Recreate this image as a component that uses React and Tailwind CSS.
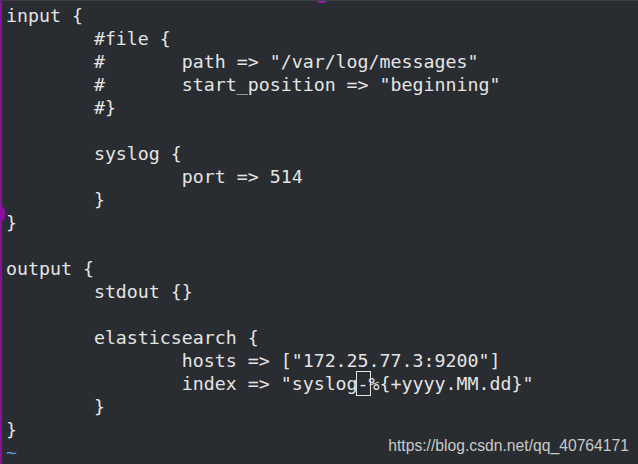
import React from "react";

const lines = [
  "input {",
  "        #file {",
  "        #       path => \"/var/log/messages\"",
  "        #       start_position => \"beginning\"",
  "        #}",
  "",
  "        syslog {",
  "                port => 514",
  "        }",
  "}",
  "",
  "output {",
  "        stdout {}",
  "",
  "        elasticsearch {",
  "                hosts => [\"172.25.77.3:9200\"]",
];

const App = () => {
  return (
    <main className="relative w-[638px] h-[464px] overflow-hidden bg-[#292c30] flex">
      {/* left edge bar */}
      <div className="w-[2px] h-full bg-[#8a0f9c] shrink-0"></div>
      <div className="absolute left-[-5px] top-[206px] w-[10px] h-[16px] rounded-full bg-[#8a0f9c]"></div>
      <div className="absolute left-[317px] top-[-5px] w-[10px] h-[8px] rounded-full bg-[#a01cb5]"></div>
      <div className="absolute left-0 top-0 w-full h-[1px] bg-[#3c4045]"></div>

      <div className="pt-[4px] pl-[4px] font-['DejaVu_Sans_Mono',monospace] text-[18.25px] leading-[23px] text-[#e4e4e4]">
        {lines.map((l, i) => (
          <div key={i} className="whitespace-pre h-[23px]">
            {l}
          </div>
        ))}
        <div className="whitespace-pre h-[23px]">
          {"                index => \"syslog"}
          <span className="outline outline-1 outline-[#e4e4e4] outline-offset-[1px]">-</span>
          {"%{+yyyy.MM.dd}\""}
        </div>
        <div className="whitespace-pre h-[23px]">{"        }"}</div>
        <div className="whitespace-pre h-[23px]">{"}"}</div>
        <div className="whitespace-pre h-[23px] text-[#5f95d6]">~</div>
      </div>

      <div className="absolute right-[9px] top-[434px] font-['Liberation_Sans',Arial,sans-serif] text-[15.7px] text-[#c9c9c9]">
        https://blog.csdn.net/qq_40764171
      </div>
    </main>
  );
};

export default App;
